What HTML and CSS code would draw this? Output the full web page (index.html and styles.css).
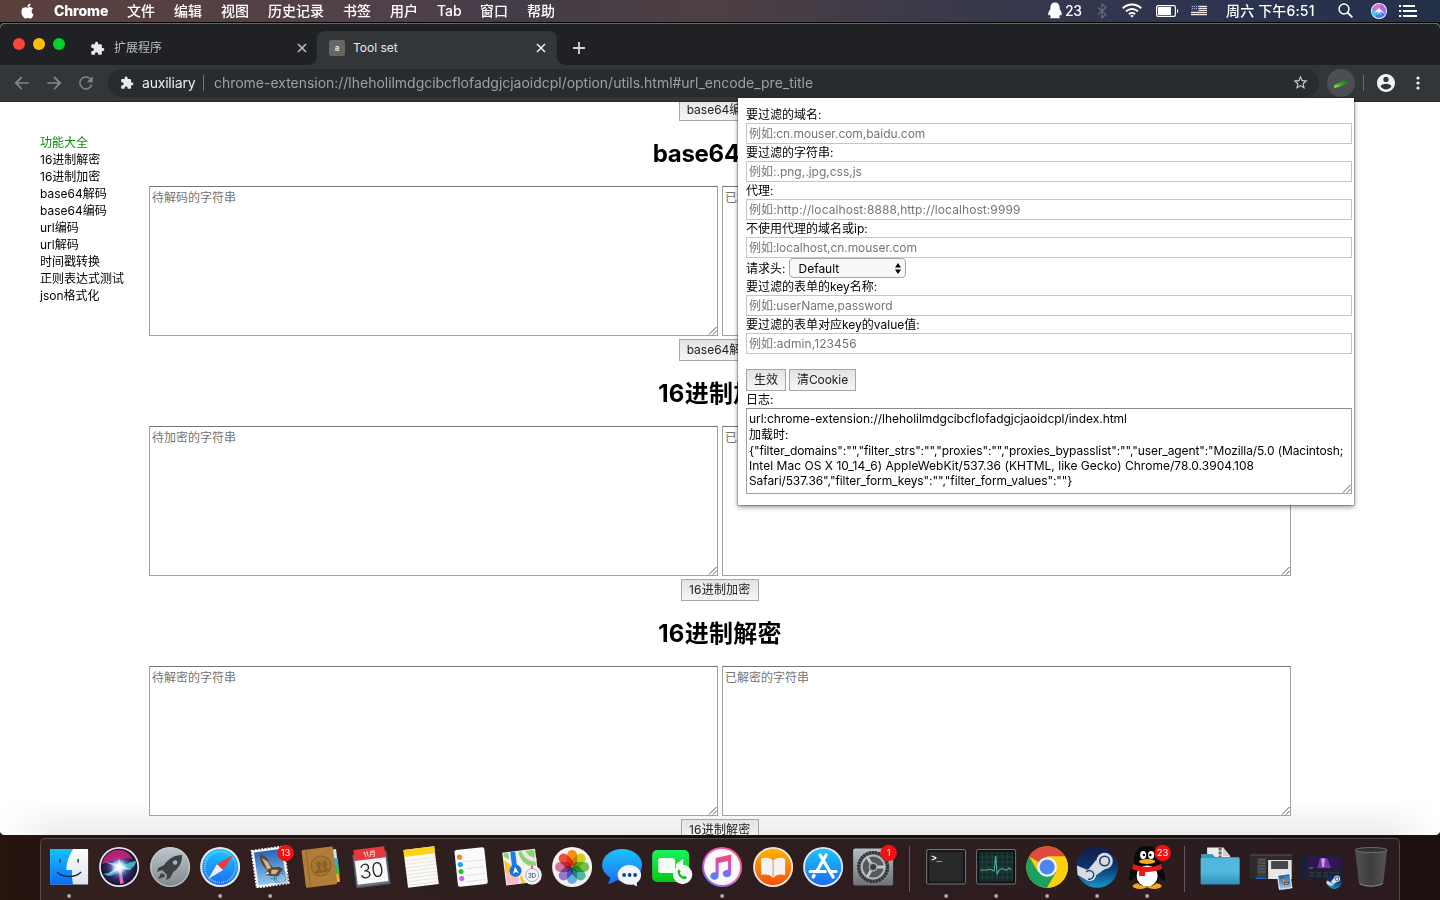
FILE: index.html
```html
<!DOCTYPE html>
<html lang="zh-CN">
<head>
<meta charset="utf-8">
<title>Tool set</title>
<link rel="stylesheet" href="styles.css">
</head>
<body>
<svg class="defs" width="0" height="0">
  <defs>
    <symbol id="puzzle" viewBox="0 0 24 24"><path d="M20.5 11H19V7c0-1.1-.9-2-2-2h-4V3.5C13 2.12 11.88 1 10.5 1S8 2.12 8 3.5V5H4c-1.1 0-1.99.9-1.99 2v3.8H3.5c1.49 0 2.7 1.21 2.7 2.7s-1.21 2.7-2.7 2.7H2V20c0 1.1.9 2 2 2h3.8v-1.5c0-1.49 1.21-2.7 2.7-2.7 1.49 0 2.7 1.21 2.7 2.7V22H17c1.1 0 2-.9 2-2v-4h1.5c1.38 0 2.5-1.12 2.5-2.5S21.88 11 20.5 11z"/></symbol>
    <symbol id="close" viewBox="0 0 10 10"><path d="M1 1l8 8M9 1l-8 8" stroke="currentColor" stroke-width="1.6" fill="none"/></symbol>
    <symbol id="grip" viewBox="0 0 9 9"><path d="M1 8.500L8.500 1M5 8.500L8.500 5" stroke="#444" stroke-width=".9" fill="none"/></symbol>
    <symbol id="steam" viewBox="-21 -21 42 42">
      <circle r="20.800" fill="url(#gSteam)"/>
      <path d="M-20.300 -1.500L-7 4L-5 11L-9 14L-19.500 8z" fill="#d9dce2"/>
      <path d="M-8 13L8 2L-1 -7L-10 4z" fill="#d9dce2"/>
      <circle cx="7.500" cy="-6" r="8.200" fill="#d9dce2"/><circle cx="7.500" cy="-6" r="5.600" fill="#1f3c70"/><circle cx="7.500" cy="-6" r="4" fill="#d9dce2"/>
      <circle cx="-7" cy="8" r="6" fill="#d9dce2"/><path d="M-11 5A4.300 4.300 0 11-9 12" fill="none" stroke="#1f4a84" stroke-width="1.400"/>
    </symbol>
    <symbol id="stamp" viewBox="-21 -21 42 42">
      <g transform="rotate(-8)">
        <rect x="-16" y="-18.500" width="32" height="37" fill="#f4f4f4" stroke="#fff" stroke-width="2" stroke-dasharray="2 1.200"/>
        <rect x="-14" y="-16.500" width="28" height="33" fill="url(#gMail)"/>
        <path d="M-8 -14C-4 -13-1 -9 0 -3L3 1L9 1L13 4L10 6L7 10L1 9L-4 8L-6 5L-3 3L-6 -1C-9 -6-9 -10-8 -14z" fill="#5e452f"/>
        <path d="M-7 -10L-3 2L1 1L-2 -6zM1 3L8 4L5 8L0 7z" fill="#cfb78d"/>
        <path d="M-6 6l3 -2 1 3z" fill="#f4eee2"/>
      </g>
    </symbol>
    <linearGradient id="gSteam" x1="0" y1="0" x2="0" y2="1"><stop offset="0" stop-color="#141c45"/><stop offset=".5" stop-color="#0c3470"/><stop offset="1" stop-color="#1596c9"/></linearGradient>
    <linearGradient id="gMail" x1="0" y1="0" x2="0" y2="1"><stop offset="0" stop-color="#2766b8"/><stop offset="1" stop-color="#8fc6f2"/></linearGradient>
    <linearGradient id="gBlue" x1="0" y1="0" x2="0" y2="1"><stop offset="0" stop-color="#1cc4fb"/><stop offset="1" stop-color="#1b6ef3"/></linearGradient>
    <linearGradient id="gFinder" x1="0" y1="0" x2="0" y2="1"><stop offset="0" stop-color="#14c2fb"/><stop offset="1" stop-color="#0a6cfb"/></linearGradient>
    <linearGradient id="gFace" x1="0" y1="0" x2="0" y2="1"><stop offset="0" stop-color="#fbfcfd"/><stop offset="1" stop-color="#dfe4ee"/></linearGradient>
    <linearGradient id="gSilver" x1="0" y1="0" x2="0" y2="1"><stop offset="0" stop-color="#bcc8ce"/><stop offset="1" stop-color="#80888d"/></linearGradient>
    <linearGradient id="gGreen" x1="0" y1="0" x2="0" y2="1"><stop offset="0" stop-color="#17f35a"/><stop offset="1" stop-color="#06c618"/></linearGradient>
    <linearGradient id="gOrange" x1="0" y1="0" x2="0" y2="1"><stop offset="0" stop-color="#ffb302"/><stop offset="1" stop-color="#f5500c"/></linearGradient>
    <linearGradient id="gRing" x1="1" y1="0" x2="0" y2="1"><stop offset="0" stop-color="#fb4d5e"/><stop offset=".5" stop-color="#e468d0"/><stop offset="1" stop-color="#5f6cf8"/></linearGradient>
    <linearGradient id="gTune" x1="0" y1="0" x2="0" y2="1"><stop offset="0" stop-color="#fb4d5e"/><stop offset=".5" stop-color="#c94bd9"/><stop offset="1" stop-color="#3a8ff8"/></linearGradient>
    <linearGradient id="gPrefs" x1="0" y1="0" x2="0" y2="1"><stop offset="0" stop-color="#b3bfc9"/><stop offset="1" stop-color="#6f7275"/></linearGradient>
    <linearGradient id="gFolder" x1="0" y1="0" x2="0" y2="1"><stop offset="0" stop-color="#4fb5dc"/><stop offset=".5" stop-color="#54b9de"/><stop offset="1" stop-color="#3391bd"/></linearGradient>
    <linearGradient id="gTrash" x1="0" y1="0" x2="1" y2="0"><stop offset="0" stop-color="#555859"/><stop offset=".5" stop-color="#404244"/><stop offset="1" stop-color="#5a5c5d"/></linearGradient>
    <radialGradient id="gSiri"><stop offset="0" stop-color="#cfe9ff"/><stop offset=".3" stop-color="#6a86c9"/><stop offset=".65" stop-color="#2f2866"/><stop offset="1" stop-color="#15122f"/></radialGradient>
    <radialGradient id="gGlow"><stop offset="0" stop-color="#fff"/><stop offset=".35" stop-color="#fff" stop-opacity=".8"/><stop offset="1" stop-color="#fff" stop-opacity="0"/></radialGradient>
    <linearGradient id="gCuke" x1="0" y1="1" x2="1" y2="0"><stop offset="0" stop-color="#b5e65a"/><stop offset=".4" stop-color="#45a52c"/><stop offset="1" stop-color="#126a2e"/></linearGradient>
  </defs>
</svg>

<header class="menubar">
  <svg class="apple" viewBox="0 0 24 24" fill="#fff"><path d="M12.152 6.896c-.948 0-2.415-1.078-3.960-1.040-2.040.027-3.910 1.183-4.961 3.014-2.117 3.675-.546 9.103 1.519 12.090 1.013 1.454 2.208 3.090 3.792 3.039 1.520-.065 2.090-.987 3.935-.987 1.831 0 2.350.987 3.960.948 1.637-.026 2.676-1.480 3.676-2.948 1.156-1.688 1.636-3.325 1.662-3.415-.039-.013-3.182-1.221-3.220-4.857-.026-3.040 2.480-4.494 2.597-4.559-1.429-2.090-3.623-2.324-4.390-2.376-2-.156-3.675 1.090-4.610 1.090zM15.530 3.830c.843-1.012 1.400-2.427 1.245-3.830-1.207.052-2.662.805-3.532 1.818-.780.896-1.454 2.338-1.273 3.714 1.338.104 2.715-.688 3.559-1.701"/></svg>
  <nav class="menus">
    <span class="app-name">Chrome</span><span>文件</span><span>编辑</span><span>视图</span><span>历史记录</span><span>书签</span><span>用户</span><span class="latin">Tab</span><span>窗口</span><span>帮助</span>
  </nav>
  <div class="status">
    <svg class="st-qq" viewBox="0 0 14 17" fill="#fff"><path d="M7 .5c3 0 4.600 2 4.600 5v1.500c1.500 2 2.400 4 2.200 6-.6.600-1.100.200-1.700-.6-.2 1-.6 1.700-1.100 2.200.8.400 1 .9.800 1.700H2.200c-.2-.8 0-1.300.8-1.700-.5-.5-.9-1.200-1.100-2.200-.6.800-1.100 1.200-1.700.6-.2-2 .7-4 2.200-6V5.500c0-3 1.600-5 4.600-5z"/></svg>
    <span class="st-num">23</span>
    <svg class="st-bt" viewBox="0 0 10 16" fill="none" stroke="#686c80" stroke-width="1.200"><path d="M1 4.500l8 7-4 3.500V1l4 3.500-8 7"/></svg>
    <svg class="st-wifi" viewBox="0 0 20 15" fill="none" stroke="#fff" stroke-width="2"><path d="M.8 5.200a13 13 0 0118.400 0M4 8.400a8.600 8.600 0 0112 0M7 11.200a4.400 4.400 0 016 0"/><path d="M10 14.800l-1.700-2.100a2.500 2.500 0 013.400 0z" fill="#fff" stroke="none"/></svg>
    <svg class="st-bat" viewBox="0 0 23 12"><rect x=".6" y=".6" width="18.800" height="10.800" rx="1.600" fill="none" stroke="#fff" stroke-width="1.200"/><rect x="2" y="2" width="13" height="8" fill="#fff"/><path d="M21 4c1.700.3 1.700 3.700 0 4z" fill="#fff"/></svg>
    <svg class="st-flag" viewBox="0 0 16 11"><rect width="16" height="11" fill="#f5e9ea"/><path d="M0 .5h16M0 2.500h16M0 4.500h16M0 6.500h16M0 8.500h16M0 10.500h16" stroke="#c0343f"/><rect width="7.500" height="6" fill="#34437c"/><path d="M1 1.500h6M1 3.500h6" stroke="#c5cbe2" stroke-width=".8" stroke-dasharray="1 1"/></svg>
    <span class="st-clock">周六 下午6:51</span>
    <svg class="st-search" viewBox="0 0 15 15" fill="none" stroke="#fff" stroke-width="1.500"><circle cx="6" cy="6" r="4.900"/><path d="M9.500 9.500l4.800 4.800" stroke-width="1.800"/></svg>
    <svg class="st-siri" viewBox="-8 -8 16 16"><circle r="8" fill="#fff"/><circle r="7" fill="#3f7df0"/><path d="M0 0L-6.500 -2A7 7 0 013 -6.300z" fill="#f264c8"/><path d="M0 0L4 -5.500A7 7 0 016 3.500z" fill="#b06bf0"/><path d="M0 0L-6.500 -2A7 7 0 00-4 5.700z" fill="#3cc5ee"/><path d="M-5 2L0 -3L5.500 2.500L1 .5L2 5L0 1L-1.500 5L-1 .5z" fill="#fff"/></svg>
    <svg class="st-list" viewBox="0 0 18 12" stroke="#fff" stroke-width="1.800"><path d="M0 1h2.200M4 1h12M0 6h2.200M4 6h14M0 11h2.200M4 11h14"/></svg>
  </div>
</header>

<main class="window">
  <div class="tabstrip">
    <div class="lights"><i class="red"></i><i class="yellow"></i><i class="green"></i></div>
    <div class="tab tab-idle">
      <svg class="tab-icon" fill="#e9eaed"><use href="#puzzle"/></svg>
      <span class="tab-title">扩展程序</span>
      <svg class="tab-close"><use href="#close"/></svg>
    </div>
    <div class="tab tab-active">
      <span class="favicon">a</span>
      <span class="tab-title">Tool set</span>
      <svg class="tab-close"><use href="#close"/></svg>
    </div>
    <svg class="new-tab" viewBox="0 0 12 12" stroke="#d5d8dc" stroke-width="1.800"><path d="M6 0v12M0 6h12"/></svg>
  </div>

  <div class="toolbar">
    <svg class="nav" viewBox="0 0 24 24" fill="#80868b"><path d="M21 11H6.830l5.590-5.590L11 3l-9 9 9 9 1.410-1.410L6.830 13H21v-2z"/></svg>
    <svg class="nav flip" viewBox="0 0 24 24" fill="#80868b"><path d="M21 11H6.830l5.590-5.590L11 3l-9 9 9 9 1.410-1.410L6.830 13H21v-2z"/></svg>
    <svg class="nav" viewBox="0 0 24 24" fill="#80868b"><path d="M18.400 5.600A9 9 0 1020.700 14h-2.100A7 7 0 1117 7.100L13 11h8V3z"/></svg>
    <div class="omnibox">
      <svg class="site-icon" fill="#e9eaed"><use href="#puzzle"/></svg>
      <span class="site-name">auxiliary</span>
      <span class="omni-sep"></span>
      <span class="url">chrome-extension://lheholilmdgcibcflofadgjcjaoidcpl/option/utils.html#url_encode_pre_title</span>
      <svg class="star" viewBox="0 0 24 24" fill="#c6c9cd"><path d="M22 9.240l-7.190-.62L12 2 9.190 8.630 2 9.240l5.460 4.730L5.820 21 12 17.270 18.180 21l-1.630-7.030L22 9.240zM12 15.400l-3.760 2.270 1-4.280-3.320-2.880 4.380-.38L12 6.100l1.710 4.040 4.380.38-3.320 2.880 1 4.280L12 15.400z"/></svg>
    </div>
    <div class="ext"><svg viewBox="-8 -8 16 16"><path d="M-7 4.500C-8 2-3 0 2 -2.500C5 -3.800 8 -3 7 -1C5 1.500-4 5.500-7 4.500z" fill="url(#gCuke)"/></svg></div>
    <span class="bar-sep"></span>
    <svg class="avatar" viewBox="2 2 20 20" fill="#f1f3f4"><path d="M12 2C6.480 2 2 6.480 2 12s4.480 10 10 10 10-4.480 10-10S17.520 2 12 2zm0 3c1.660 0 3 1.340 3 3s-1.340 3-3 3-3-1.340-3-3 1.340-3 3-3zm0 14.200c-2.500 0-4.710-1.280-6-3.220.03-1.990 4-3.080 6-3.080 1.990 0 5.970 1.090 6 3.080-1.290 1.940-3.500 3.220-6 3.220z"/></svg>
    <svg class="dots" viewBox="0 0 4 14" fill="#f1f3f4"><circle cx="2" cy="2" r="1.600"/><circle cx="2" cy="7" r="1.600"/><circle cx="2" cy="12" r="1.600"/></svg>
  </div>

  <div class="page">
    <ul class="index">
      <li class="index-title">功能大全</li><li>16进制解密</li><li>16进制加密</li><li>base64解码</li><li>base64编码</li><li>url编码</li><li>url解码</li><li>时间戳转换</li><li>正则表达式测试</li><li>json格式化</li>
    </ul>
    <div class="tools">
      <div class="btn">base64编码</div>
      <section class="tool">
        <h2 class="tight">base64解码</h2>
        <div class="areas"><div class="area">待解码的字符串<svg class="grip"><use href="#grip"/></svg></div><div class="area">已解码的字符串<svg class="grip"><use href="#grip"/></svg></div></div>
        <div class="btn">base64解码</div>
      </section>
      <section class="tool">
        <h2>16进制加密</h2>
        <div class="areas"><div class="area">待加密的字符串<svg class="grip"><use href="#grip"/></svg></div><div class="area">已加密的字符串<svg class="grip"><use href="#grip"/></svg></div></div>
        <div class="btn hex">16进制加密</div>
      </section>
      <section class="tool">
        <h2>16进制解密</h2>
        <div class="areas"><div class="area">待解密的字符串<svg class="grip"><use href="#grip"/></svg></div><div class="area">已解密的字符串<svg class="grip"><use href="#grip"/></svg></div></div>
        <div class="btn hex">16进制解密</div>
      </section>
    </div>
  </div>
</main>

<aside class="popup">
  <div class="label">要过滤的域名:</div><div class="field snug">例如:cn.mouser.com,baidu.com</div>
  <div class="label">要过滤的字符串:</div><div class="field">例如:.png,.jpg,css,js</div>
  <div class="label">代理:</div><div class="field wide">例如:http://localhost:8888,http://localhost:9999</div>
  <div class="label">不使用代理的域名或ip:</div><div class="field snug">例如:localhost,cn.mouser.com</div>
  <div class="select-row"><span>请求头:</span><div class="select"><span>Default</span><svg viewBox="0 0 6 11"><path d="M3 0l3 4.500H0zM3 11l3-4.500H0z"/></svg></div></div>
  <div class="label">要过滤的表单的key名称:</div><div class="field snug">例如:userName,password</div>
  <div class="label">要过滤的表单对应key的value值:</div><div class="field wide">例如:admin,123456</div>
  <div class="actions"><div class="btn">生效</div><div class="btn cookie">清Cookie</div></div>
  <div class="label">日志:</div>
  <div class="log">
    <div class="l1">url:chrome-extension://lheholilmdgcibcflofadgjcjaoidcpl/index.html</div>
    <div class="cjk-line">加载时:</div>
    <div class="l3">{"filter_domains":"","filter_strs":"","proxies":"","proxies_bypasslist":"","user_agent":"Mozilla/5.0 (Macintosh;</div>
    <div class="l4">Intel Mac OS X 10_14_6) AppleWebKit/537.36 (KHTML, like Gecko) Chrome/78.0.3904.108</div>
    <div class="l5">Safari/537.36","filter_form_keys":"","filter_form_values":""}</div>
    <svg class="grip"><use href="#grip"/></svg>
  </div>
</aside>

<footer class="dock">
  <!-- Finder -->
  <svg class="app" viewBox="-25 -27 50 60"><rect x="-19" y="-18" width="38" height="35.500" rx="1" fill="url(#gFace)"/><path d="M-19 -18H4C0 -12-2.500 -5-3 3H3C2.500 8 3 13 4 17.500H-19z" fill="url(#gFinder)"/><path d="M-9 -8v3.500M9 -8v3.500" stroke="#172c49" stroke-width="1.400"/><path d="M-12 5C-6 11 6 11 12 5" fill="none" stroke="#13233d" stroke-width="1.400"/><circle class="run" cy="29" r="1.900"/></svg>
  <!-- Siri -->
  <svg class="app" viewBox="-25 -27 50 60"><circle r="20" fill="#e9e8ee"/><circle r="18.300" fill="url(#gSiri)"/><path d="M-17 -3C-14 -20 8 -22 13 -8C6 -10-4 -7-17 -3z" fill="#cf2377" opacity=".85"/><path d="M-16 7C-8 6-3 3 0 -1C6 -2 12 -6 17 -6C15 4 8 3 1 1C-3 8-9 11-16 7z" fill="#45e0d8" opacity=".75"/><path d="M-1 2L1 17L5 16z" fill="#f062b4"/><path d="M0 -9L2 -2L13 3L2 2L4 14L-1 3L-12 8L-3 0L-14 -5L-1 -3z" fill="#eafaff" opacity=".6"/><circle r="8" fill="url(#gGlow)"/></svg>
  <!-- Launchpad -->
  <svg class="app" viewBox="-25 -27 50 60"><circle r="20" fill="url(#gSilver)"/><circle r="19.300" fill="none" stroke="#c8d0d4"/><path d="M12 -12C4 -12-2 -8-6 -2L-12 1L-13 5L-8 3L-3 8L-4 13L0 11L3 5C9 1 12 -5 12 -12z" fill="#3c4043"/><path d="M-9 6L-12 12L-6 10L-5 8zM-8 3L-3 8" fill="#3c4043"/><circle cx="5" cy="-4.500" r="2.300" fill="#aab4b9"/></svg>
  <!-- Safari -->
  <svg class="app" viewBox="-25 -27 50 60"><circle r="20" fill="#e8ebee"/><circle r="18" fill="url(#gBlue)"/><circle r="15.500" fill="none" stroke="#b3e1fb" stroke-width="2" stroke-dasharray=".6 1.430"/><path d="M13 -12L-3.200 -2.800L3 3z" fill="#f03a34"/><path d="M-12 12L-3.200 -2.800L3 3z" fill="#eef1f3"/><circle class="run" cy="29" r="1.900"/></svg>
  <!-- Mail -->
  <svg class="app" viewBox="-25 -27 50 60"><use href="#stamp" x="-21" y="-21" width="42" height="42"/><g fill="none" stroke="#344f70" stroke-width=".7" opacity=".8"><circle cx="11" cy="11" r="7"/><circle cx="11" cy="11" r="5"/><path d="M0 8q3 2 6 0M0 11q3 2 6 0"/></g><circle class="badge" cx="15.500" cy="-14" r="8.300"/><text class="badge-text" x="15.500" y="-10.800">13</text><circle class="run" cy="29" r="1.900"/></svg>
  <!-- Contacts -->
  <svg class="app" viewBox="-25 -27 50 60"><g transform="rotate(-7)"><rect x="14" y="-16" width="4" height="12" fill="#ddd"/><rect x="14" y="-7" width="4.500" height="8" fill="#37a9d8"/><rect x="14" y="1" width="4.500" height="8" fill="#3cba4e"/><rect x="14" y="9" width="4" height="8" fill="#eeb02c"/><rect x="-16.500" y="-19" width="31.500" height="38" rx="1.500" fill="#b07e3a"/><path d="M-12 -19v38" stroke="#94662a" stroke-width="1"/><circle cx="1" cy="-1" r="10" fill="#a87634" stroke="#8b6027"/><path d="M-6 6c0-3 4-3 4-5-2-3-2-7 1-7s3 4 1 7c1 2 3 2 3 5zM2 6c1-2 2-3 1-5-1-4 0-7 2-7s4 4 1 7c0 2 3 2 3 4z" fill="#8b6027"/></g></svg>
  <!-- Calendar -->
  <svg class="app" viewBox="-25 -27 50 60"><g transform="rotate(-7)"><rect x="-17" y="-14" width="34" height="33" fill="#66727c" stroke="#414b54"/><rect x="-15.500" y="-9" width="31" height="25" fill="#f9f9f9"/><rect x="-15.500" y="-19" width="31" height="11" fill="#e7393b"/><text x="0" y="-10.500" class="cal-month">11月</text><text x="0" y="10.500" class="cal-day">30</text></g></svg>
  <!-- Notes -->
  <svg class="app" viewBox="-25 -27 50 60"><g transform="rotate(-7)"><rect x="-15.500" y="-19" width="31" height="38" fill="#fbfaf6"/><rect x="-15.500" y="-19" width="31" height="7" fill="#fdd21b"/><path d="M-15 -8h30M-15 -4.500h30M-15 -1h30M-15 2.500h30M-15 6h30M-15 9.500h30M-15 13h30M-15 16.500h30" stroke="#dddcd8" stroke-width=".7"/></g></svg>
  <!-- Reminders -->
  <svg class="app" viewBox="-25 -27 50 60"><g transform="rotate(-6)"><rect x="-15" y="-18.500" width="30" height="37" rx="2" fill="#fafafa"/><path d="M-6 -6h19M-6 1h19M-6 8h19M-6 14h19" stroke="#d8d8d8" stroke-width=".8"/><circle cx="-10.500" cy="-11" r="2.600" fill="#fb8618"/><circle cx="-10.500" cy="-3.500" r="2.600" fill="#20a4f8"/><circle cx="-10.500" cy="3.500" r="2.600" fill="#25c91f"/><circle cx="-10.500" cy="10.500" r="2.600" fill="#cd65de"/></g></svg>
  <!-- Maps -->
  <svg class="app" viewBox="-25 -27 50 60"><g transform="rotate(-7)"><rect x="-17" y="-16.500" width="33" height="33" fill="#f6f2e7"/><path d="M-16 -6L-4 4V16H-16z" fill="#f7bcc8"/><path d="M-16 -9L-7 0V10L-16 2zM-2 8L8 13V16H-2z" fill="#fbc62b"/><path d="M-1 -15.500H15V2C7 1 0 -5-1 -15.500zM-16 -15.500h5v7l-5-4z" fill="#8bd378"/><path d="M4 -16q2 9 12 11" fill="none" stroke="#eae7dd" stroke-width="4"/><rect x="-9" y="-16" width="5" height="20" fill="#187fee"/><circle cx="-6" cy="3" r="6" fill="#1272e6"/><path d="M-6 -1l3 7-3-1.800-3 1.800z" fill="#fff"/></g><circle cx="11" cy="8" r="9.700" fill="#f1f4f6"/><circle cx="11" cy="8" r="6.500" fill="none" stroke="#87a1b4" stroke-width=".8"/><path d="M11 -1.500v3" stroke="#e33" stroke-width="1.600"/><text x="11" y="10.500" class="map-text">3D</text></svg>
  <!-- Photos -->
  <svg class="app" viewBox="-25 -27 50 60"><circle r="20" fill="#f4f3f2"/><g class="petals"><rect x="-5" y="-17" width="10" height="16.500" rx="5" fill="#fb9a14"/><rect x="-5" y="-17" width="10" height="16.500" rx="5" fill="#d4dc25" transform="rotate(45)"/><rect x="-5" y="-17" width="10" height="16.500" rx="5" fill="#79c952" transform="rotate(90)"/><rect x="-5" y="-17" width="10" height="16.500" rx="5" fill="#56bfa0" transform="rotate(135)"/><rect x="-5" y="-17" width="10" height="16.500" rx="5" fill="#72b3ee" transform="rotate(180)"/><rect x="-5" y="-17" width="10" height="16.500" rx="5" fill="#9b7fd2" transform="rotate(225)"/><rect x="-5" y="-17" width="10" height="16.500" rx="5" fill="#e078a8" transform="rotate(270)"/><rect x="-5" y="-17" width="10" height="16.500" rx="5" fill="#f4533f" transform="rotate(315)"/></g></svg>
  <!-- Messages -->
  <svg class="app" viewBox="-25 -27 50 60"><path d="M0 -18C11 -18 20 -11 20 -2C20 7 11 14 0 14C-2 14-4 13.800-6 13.300C-8 15.500-11 16.800-15 17C-13 15-12 13-12 10.500C-17 7.500-20 3-20 -2C-20 -11-11 -18 0 -18z" fill="url(#gBlue)"/><path d="M7 -2C14 -2 19 2.500 19 8C19 11 17.500 14 14.500 16L15 19.500L11 17.500C3 19-4.500 14-4.500 8C-4.500 2.500 1 -2 7 -2z" fill="#f1f5fb"/><g fill="#16438d"><circle cx="2" cy="8" r="1.900"/><circle cx="7.500" cy="8" r="1.900"/><circle cx="13" cy="8" r="1.900"/></g></svg>
  <!-- FaceTime -->
  <svg class="app" viewBox="-25 -27 50 60"><rect x="-20" y="-17" width="37" height="32" rx="5" fill="url(#gGreen)"/><rect x="-14" y="-9" width="17" height="15" rx="3" fill="#f3fff3"/><path d="M4 -3L11 -8V6L4 1z" fill="#f3fff3"/><circle cx="10.500" cy="7.500" r="9.700" fill="#f5f7f5"/><path d="M5.500 3.500c1-2 2-1 3 1l-.8 1.500c.8 2 2 3 3.500 3.500l1.500-.8c2 1 2.500 2 1 3-4 2-9-4-8.200-8.200z" fill="#14bc20"/></svg>
  <!-- iTunes -->
  <svg class="app" viewBox="-25 -27 50 60"><circle r="20" fill="url(#gRing)"/><circle r="18" fill="#fbf8fc"/><path d="M-6.500 -9L9 -12.500V6.500A4.200 3.700 0 116 3V-6L-3.500 -4V9A4.200 3.700 0 11-6.500 5.500z" fill="url(#gTune)"/><circle class="run" cy="29" r="1.900"/></svg>
  <!-- Books -->
  <svg class="app" viewBox="-25 -27 50 60"><circle r="20" fill="#eee7e1"/><circle r="18.200" fill="url(#gOrange)"/><path d="M0 -6C-3 -10-9 -10-12 -8V8C-8 7-3 7 0 11C3 7 8 7 12 8V-8C9 -10 3 -10 0 -6z" fill="#f5f3f1"/><path d="M0 -6V10" stroke="#d69569"/></svg>
  <!-- App Store -->
  <svg class="app" viewBox="-25 -27 50 60"><circle r="20" fill="#e3e8ee"/><circle r="18.200" fill="url(#gBlue)"/><path d="M3 -12L-6.500 4.500M-9 8.500L-10 10M-3 -12L10 10M-13 4.500H2M6.500 4.500H13" fill="none" stroke="#fff" stroke-width="3.200" stroke-linecap="round"/></svg>
  <!-- System Preferences -->
  <svg class="app" viewBox="-25 -27 50 60"><rect x="-20" y="-18.500" width="40" height="37" rx="2" fill="url(#gPrefs)"/><circle r="16" fill="#56595b"/><circle r="14.500" fill="none" stroke="#272a2c" stroke-width="3" stroke-dasharray="1.500 1.540"/><circle r="11.500" fill="none" stroke="#b6b9bb" stroke-width="2"/><path d="M0 0L-6 -10M0 0H12M0 0L-6 10" stroke="#c5c7c8" stroke-width="2.800"/><circle r="3.800" fill="#3c3f41" stroke="#aaadaf" stroke-width="1.500"/><circle class="badge" cx="15.500" cy="-14" r="8.300"/><text class="badge-text" x="15.500" y="-10.800">1</text></svg>
  <span class="dock-sep"></span>
  <!-- Terminal -->
  <svg class="app" viewBox="-25 -27 50 60"><rect x="-19.500" y="-17.500" width="39" height="34.500" rx="1.500" fill="#1d1e20" stroke="#727577"/><rect x="-17.500" y="-15.500" width="35" height="30.500" fill="#28292b" stroke="#111"/><text class="prompt" x="-15" y="-6">&gt;_</text><circle class="run" cy="29" r="1.900"/></svg>
  <!-- Activity Monitor -->
  <svg class="app" viewBox="-25 -27 50 60"><rect x="-19.500" y="-17.500" width="39" height="34.500" rx="1.500" fill="#111" stroke="#727577"/><rect x="-17" y="-15" width="34" height="29.500" fill="#142a2a"/><path d="M-14 -15v29M-9 -15v29M-4 -15v29M1 -15v29M6 -15v29M11 -15v29M16 -15v29M-17 -10h34M-17 -5h34M-17 0h34M-17 5h34M-17 10h34" stroke="#28504c" stroke-width=".6"/><path d="M-16 3h7l2 -1 3 1 2 1 1.500 -15L1 7l2 -4c4 -3 4 0 8 0l2-2 2 2" fill="none" stroke="#4fae9b" stroke-width="1.100"/><circle class="run" cy="29" r="1.900"/></svg>
  <!-- Chrome -->
  <svg class="app" viewBox="-25 -27 50 60"><circle r="20.800" fill="#fbd00b"/><path d="M0 0L-18 -10.400A20.800 20.800 0 0118 -10.400H0z" fill="#dd4b3e"/><path d="M-18 -10.400A20.800 20.800 0 000 20.800L9 5.200L0 0L-9 5z" fill="#1ba160"/><path d="M0 -10.400H18A20.800 20.800 0 010 20.800L9 5.200z" fill="#fbd00b"/><circle r="9.800" fill="#f4f4f4"/><circle r="7.600" fill="#4b86ee"/><circle class="run" cy="29" r="1.900"/></svg>
  <!-- Steam -->
  <svg class="app" viewBox="-25 -27 50 60"><use href="#steam" x="-21" y="-21" width="42" height="42"/><circle class="run" cy="29" r="1.900"/></svg>
  <!-- QQ -->
  <svg class="app" viewBox="-25 -27 50 60"><ellipse cx="-7" cy="19" rx="7.500" ry="3" fill="#f5a81c"/><ellipse cx="7" cy="19" rx="7.500" ry="3" fill="#f5a81c"/><path d="M0 -21C9 -21 13 -15 13 -6C13 -2 19 6 18 13C16 15 13 11 12 9C11 16 7 19.500 0 19.500C-7 19.500-11 16-12 9C-13 11-16 15-18 13C-19 6-13 -2-13 -6C-13 -15-9 -21 0 -21z" fill="#090909"/><ellipse cy="9" rx="10.500" ry="10.500" fill="#fff"/><ellipse cx="-4" cy="-12" rx="3" ry="4" fill="#fff"/><ellipse cx="4" cy="-12" rx="3" ry="4" fill="#fff"/><circle cx="-3.200" cy="-12" r="1.200"/><circle cx="3.200" cy="-12" r="1.200"/><ellipse cy="-5.500" rx="8" ry="2.600" fill="#f9ae20"/><path d="M-14 -3C-5 1 6 1 14 -3L15 2C5 6-5 6-15 2z" fill="#e51b1b"/><path d="M-8 2h6v7h-6z" fill="#e51b1b"/><circle class="badge" cx="15.500" cy="-14" r="8.300"/><text class="badge-text" x="15.500" y="-10.800">23</text><circle class="run" cy="29" r="1.900"/></svg>
  <span class="dock-sep"></span>
  <!-- Downloads -->
  <svg class="app" viewBox="-25 -27 50 60"><path d="M-13 -19.500H3L10 -11V-4H-13z" fill="#eee"/><path d="M0 -19.500v10" stroke="#666" stroke-width="3" stroke-dasharray="3 1"/><path d="M3 -19.500L10 -11H3z" fill="#ccc"/><path d="M-19 -13H-8L-5 -10H19V17H-19z" fill="#3a97bd"/><rect x="-19.500" y="-9" width="39" height="26.500" rx="1" fill="url(#gFolder)"/></svg>
  <!-- Minimised windows -->
  <svg class="app" viewBox="-25 -27 50 60"><rect x="-21.500" y="-12" width="43" height="24" fill="#2b2b2d"/><rect x="-14" y="-9" width="9" height="19" fill="#3f3f41"/><path d="M-13 -7h7M-13 -4h7M-13 -1h7M-13 2h7M-13 5h7" stroke="#777" stroke-width=".7"/><rect x="-3" y="-7" width="23.500" height="19" fill="#e6e6e6"/><rect x="0" y="-6" width="17" height="8" fill="#47474e"/><rect x="-15" y="10.500" width="10" height="1.500" fill="#1d63d8"/><path d="M-21 -12h42" stroke="#555"/><use href="#stamp" x="5" y="6" width="17" height="17"/></svg>
  <svg class="app" viewBox="-25 -27 50 60"><rect x="-21.500" y="-12" width="43" height="24" fill="#1b2132"/><rect x="-13" y="-10" width="33" height="12" fill="#2f1652"/><path d="M-4 1l3-10h7l4 10z" fill="#6b3aa6"/><path d="M0 -8l2-1 2 1-1 8h-2z" fill="#c79bea"/><path d="M-12 6h30M-12 9h30" stroke="#49433f" stroke-dasharray="5 2"/><path d="M-12 1h4" stroke="#57a92f"/><use href="#steam" x="5" y="6" width="16" height="16"/></svg>
  <!-- Trash -->
  <svg class="app" viewBox="-25 -27 50 60"><path d="M-16 -17L-12 17C-7 20.500 7 20.500 12 17L16 -17z" fill="url(#gTrash)" opacity=".9"/><ellipse cy="-17" rx="16" ry="2.500" fill="#303233" stroke="#7a7c7d" stroke-width=".8"/><path d="M-11.500 16.500C-6 20 6 20 11.500 16.500" stroke="#8b8d8e" fill="none"/></svg>
</footer>
</body>
</html>
```

FILE: styles.css
```css
* { box-sizing: border-box; }
html, body { margin: 0; width: 1440px; height: 900px; overflow: hidden; }
body {
  position: relative;
  display: flex;
  flex-direction: column;
  background: linear-gradient(90deg, #25150f 0, #1a0f0d 50%, #1c0f10 100%);
  font: 12px/17px Inter, "Noto Sans CJK SC", sans-serif;
  color: #000;
}
svg { display: block; flex: none; }
span, div, li, h2 { white-space: nowrap; }
.defs { position: absolute; }

/* menu bar */
.menubar {
  height: 23px; flex: none;
  display: flex; align-items: center;
  padding: 0 23px 1px 20px;
  border-bottom: 1px solid #000;
  background: linear-gradient(90deg, #5a403d 0, #50404a 28%, #443c48 36%, #4e3f43 49%, #3a394b 66%, #2c3450 85%, #243048 100%);
  color: #fff;
  font-size: 14px; font-weight: 500; line-height: 22px;
}
.apple { width: 15px; height: 16px; }
.menus { display: flex; gap: 19px; margin-left: 19px; }
.app-name { font-weight: 800; letter-spacing: -.1px; width: 54px; }
.menus .latin { width: 24px; }
.status { margin-left: auto; display: flex; align-items: center; }
.st-qq { width: 14px; height: 17px; }
.st-num { width: 17px; margin-left: 3px; letter-spacing: -.4px; }
.st-bt { width: 10px; height: 16px; margin-left: 15px; }
.st-wifi { width: 20px; height: 15px; margin-left: 15px; }
.st-bat { width: 23px; height: 12px; margin-left: 14px; }
.st-flag { width: 16px; height: 11px; margin-left: 12px; }
.st-clock { width: 90px; margin-left: 19px; letter-spacing: .15px; }
.st-search { width: 15px; height: 15px; margin-left: 22px; }
.st-siri { width: 16px; height: 16px; margin-left: 18px; }
.st-list { width: 18px; height: 12px; margin-left: 12px; }

/* browser window */
.window {
  height: 812px; flex: none;
  display: flex; flex-direction: column;
  border-radius: 5px;
  overflow: hidden;
  background: #fff;
}
.tabstrip {
  height: 42px; flex: none;
  display: flex; align-items: flex-end;
  padding-left: 13px;
  background: #202124;
  border-top: 1px solid #65686a;
  border-radius: 5px 5px 0 0;
}
.lights { display: flex; gap: 8px; padding-bottom: 15px; }
.lights i { width: 12px; height: 12px; border-radius: 50%; }
.red { background: #ff453a; }
.yellow { background: #ffbd05; }
.green { background: #06d02c; }
.tab { height: 34px; width: 240px; display: flex; align-items: center; padding: 0 11px 0 12px; color: #b9bdc2; }
.tab-idle { margin-left: 12px; padding-right: 10px; }
.tab-active { position: relative; color: #e9ebed; background: #323639; border-radius: 8px 8px 0 0; }
.tab-active::before, .tab-active::after {
  content: ""; position: absolute; bottom: 0; width: 8px; height: 8px;
}
.tab-active::before { left: -8px; background: radial-gradient(circle at 0 0, transparent 7.500px, #323639 8px); }
.tab-active::after { right: -8px; background: radial-gradient(circle at 100% 0, transparent 7.500px, #323639 8px); }
.tab-icon { width: 15px; height: 15px; }
.tab-idle .tab-icon { margin-left: 1px; }
.tab-idle .tab-title { margin-left: 9px; }
.favicon { width: 16px; height: 16px; border-radius: 2px; background: #666; color: #eee; font-size: 8px; font-weight: 600; line-height: 16px; text-align: center; }
.tab-title { margin-left: 8px; line-height: 16px; }
.tab-active .tab-title { letter-spacing: 0; }
.tab-close { width: 10px; height: 10px; margin-left: auto; }
.new-tab { width: 12px; height: 12px; margin: 0 0 11px 16px; }

.toolbar {
  height: 37px; flex: none;
  display: flex; align-items: center;
  padding: 0 20px 1px 13px;
  background: #323639;
  border-bottom: 1px solid #26292b;
}
.nav { width: 18px; height: 18px; margin-right: 14px; }
.flip { transform: scaleX(-1); }
.omnibox {
  width: 1211px; height: 28px; margin-left: -1px;
  display: flex; align-items: center;
  padding: 0 10px 0 12px;
  border-radius: 14px;
  background: #282c2f;
  font-size: 14px; line-height: 20px;
}
.site-icon { width: 14px; height: 14px; }
.site-name { width: 54px; margin-left: 8px; color: #eceef0; letter-spacing: -.2px; }
.omni-sep { width: 1px; height: 16px; margin: 0 10px 0 7px; background: #73777b; }
.url { color: #9aa0a6; letter-spacing: -.022px; }
.star { width: 17px; height: 17px; margin-left: auto; }
.ext { width: 28px; height: 28px; margin-left: 8px; border-radius: 50%; background: #4b4f52; display: grid; place-items: center; }
.ext svg { width: 16px; height: 16px; }
.bar-sep { width: 1px; height: 16px; margin-left: 8px; background: #686c6f; }
.avatar { width: 18px; height: 18px; margin-left: 13px; }
.dots { width: 4px; height: 14px; margin-left: auto; }

/* page */
.page {
  position: relative;
  flex: 1; min-height: 0;
  display: grid; grid-template-columns: 149px 1142px;
  overflow: hidden;
  background: linear-gradient(90deg, #fff 0, transparent 60px calc(100% - 60px), #fff 100%), linear-gradient(#fff calc(100% - 36px), #ececec);
}
.index { list-style: none; margin: 0; padding: 32px 0 0 40px; }
.index li { height: 17px; }
.index-title { color: #0a8a0a; }
.tools { display: flex; flex-direction: column; align-items: center; margin-top: -3px; }
.tool { width: 100%; height: 240px; flex: none; display: flex; flex-direction: column; align-items: center; }
.tool h2 { margin: 0; height: 65px; line-height: 65px; font-size: 24px; font-weight: 700; letter-spacing: .3px; }
.tool h2.tight { letter-spacing: -.3px; }
.areas { width: 100%; display: flex; gap: 4px; margin-bottom: 3px; }
.area {
  position: relative;
  width: 569px; height: 150px;
  padding: 2px;
  border: 1px solid #a2a2a2; border-top-color: #767676;
  color: #757575; background: #fff;
}
.grip { position: absolute; right: 0; bottom: 0; width: 9px; height: 9px; }
.btn {
  height: 22px; flex: none;
  padding: 0 7px;
  border: 1px solid #a6a6a6;
  background: linear-gradient(#e3e3e3, #f6f6f6);
  line-height: 20px; color: #222;
}
.hex { width: 78px; letter-spacing: .2px; }
.cookie { width: 67px; letter-spacing: -.08px; }

/* extension popup */
.popup {
  position: absolute; left: 738px; top: 98px;
  width: 616px; height: 407px;
  padding: 8px 2px 0 8px;
  background: #fff;
  box-shadow: 0 0 0 1px rgba(0,0,0,.22), 0 2px 5px rgba(0,0,0,.45);
}
.label { height: 17px; }
.field { height: 21px; border: 1px solid #c6c6c6; padding: 0 2px; line-height: 19px; color: #757575; letter-spacing: 0; }
.snug { letter-spacing: -.06px; }
.wide { letter-spacing: .08px; }
.select-row { height: 20px; display: flex; align-items: center; gap: 4px; }
.select {
  width: 117px; height: 20px;
  display: flex; align-items: center; justify-content: space-between;
  padding: 0 4px 0 8px;
  border: 1px solid #a6a6a6; border-radius: 4px;
  background: #f8f8f8;
}
.select svg { width: 6px; height: 11px; }
.actions { display: flex; gap: 3px; margin-top: 15px; }
.log { position: relative; height: 86px; padding: 2px; border: 1px solid #a2a2a2; border-top-color: #8a8a8a; line-height: 15px; }
.log .cjk-line { line-height: 17px; }
.l1 { letter-spacing: -.03px; }
.l3 { letter-spacing: -.108px; }
.l4 { letter-spacing: .024px; }
.l5 { letter-spacing: -.1px; }

/* dock */
.dock {
  width: 1360px; height: 62px; flex: none;
  margin: 3px 0 0 40px;
  display: flex;
  padding-left: 3px;
  border: 1px solid #55494a; border-bottom: 0;
  border-radius: 5px 5px 0 0;
  background: linear-gradient(90deg, #32201e, #2d1d1e 60%, #2b1b1e);
}
.app { width: 50.250px; height: 60px; margin-top: 1px; overflow: visible; }
.run { fill: #b5aaaa; }
.badge { fill: #ee1212; }
.badge-text { fill: #fff; font-size: 9.500px; text-anchor: middle; }
.dock-sep { width: 1px; height: 46px; margin: 7px 10.700px 0 11.200px; background: #655a5b; }
.cal-month { fill: #fff; font-size: 7px; text-anchor: middle; }
.cal-day { fill: #222; font-size: 20px; font-weight: 300; text-anchor: middle; }
.map-text { fill: #50667a; font-size: 6px; font-weight: 600; text-anchor: middle; }
.petals rect { mix-blend-mode: multiply; }
.prompt { fill: #fff; font: 700 9px "Liberation Mono", monospace; }
```
